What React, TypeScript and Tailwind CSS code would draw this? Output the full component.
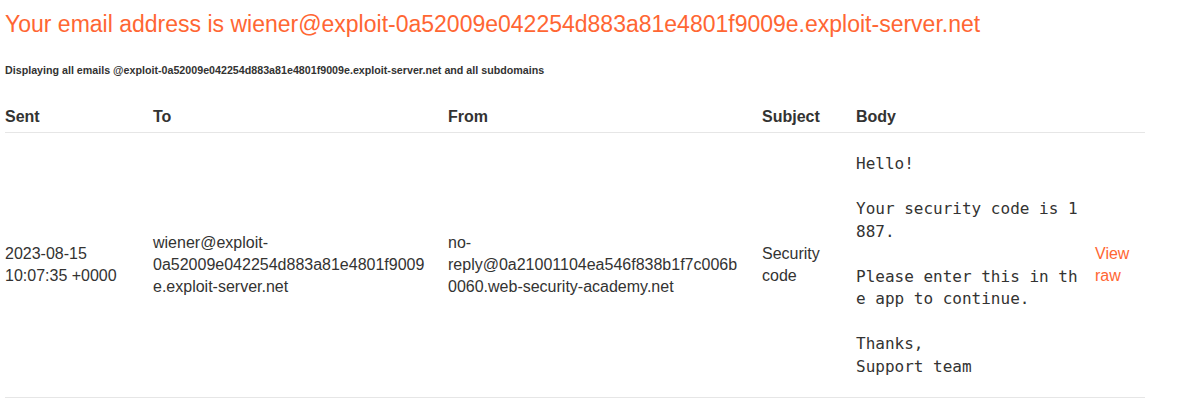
import React from 'react'

const domain = 'exploit-0a52009e042254d883a81e4801f9009e.exploit-server.net'

const body = `Hello!

Your security code is 1887.

Please enter this in the app to continue.

Thanks,
Support team`

const App: React.FC = () => {
  return (
    <div className="min-h-screen bg-white pl-[5px] text-[#333332]">
      <div className="font-['Liberation_Sans',Arial,sans-serif]">
        {/* Header */}
        <h1 className="mt-[8px] text-[23px] leading-[33px] font-normal text-[#ff6633]">
          Your email address is wiener@{domain}
        </h1>
        <p className="mt-[22px] text-[10.7px] leading-[14px] font-bold">
          Displaying all emails @{domain} and all subdomains
        </p>

        {/* Emails table */}
        <table className="mt-[25px] w-[1140px] table-fixed border-collapse text-[16px] leading-[22px]">
          <thead>
            <tr className="border-b border-[#e6e6e6] text-left">
              <th className="w-[148px] py-[4px] pr-[20px] font-bold">Sent</th>
              <th className="w-[295px] py-[4px] pr-[20px] font-bold">To</th>
              <th className="w-[314px] py-[4px] pr-[20px] font-bold">From</th>
              <th className="w-[94px] py-[4px] pr-[20px] font-bold">Subject</th>
              <th className="w-[239px] py-[4px] pr-[13px] font-bold">Body</th>
              <th className="w-[50px] py-[4px]"></th>
            </tr>
          </thead>
          <tbody>
            <tr className="border-b border-[#e6e6e6] align-middle">
              <td className="py-[4px] pr-[20px] break-words">2023-08-15 10:07:35 +0000</td>
              <td className="py-[4px] pr-[20px] break-words">wiener@{domain}</td>
              <td className="py-[4px] pr-[20px] break-words">
                no-reply@0a21001104ea546f838b1f7c006b0060.web-security-academy.net
              </td>
              <td className="py-[4px] pr-[20px] break-words">Security code</td>
              <td className="py-[4px] pr-[13px]">
                <pre className="mt-[16px] mb-[15px] whitespace-pre-wrap break-all font-['DejaVu_Sans_Mono',monospace] text-[16px] leading-[22.5px]">
                  {body}
                </pre>
              </td>
              <td className="py-[4px]">
                <a href="#" className="text-[#ff6633]">View raw</a>
              </td>
            </tr>
          </tbody>
        </table>
      </div>
    </div>
  )
}

export default App
